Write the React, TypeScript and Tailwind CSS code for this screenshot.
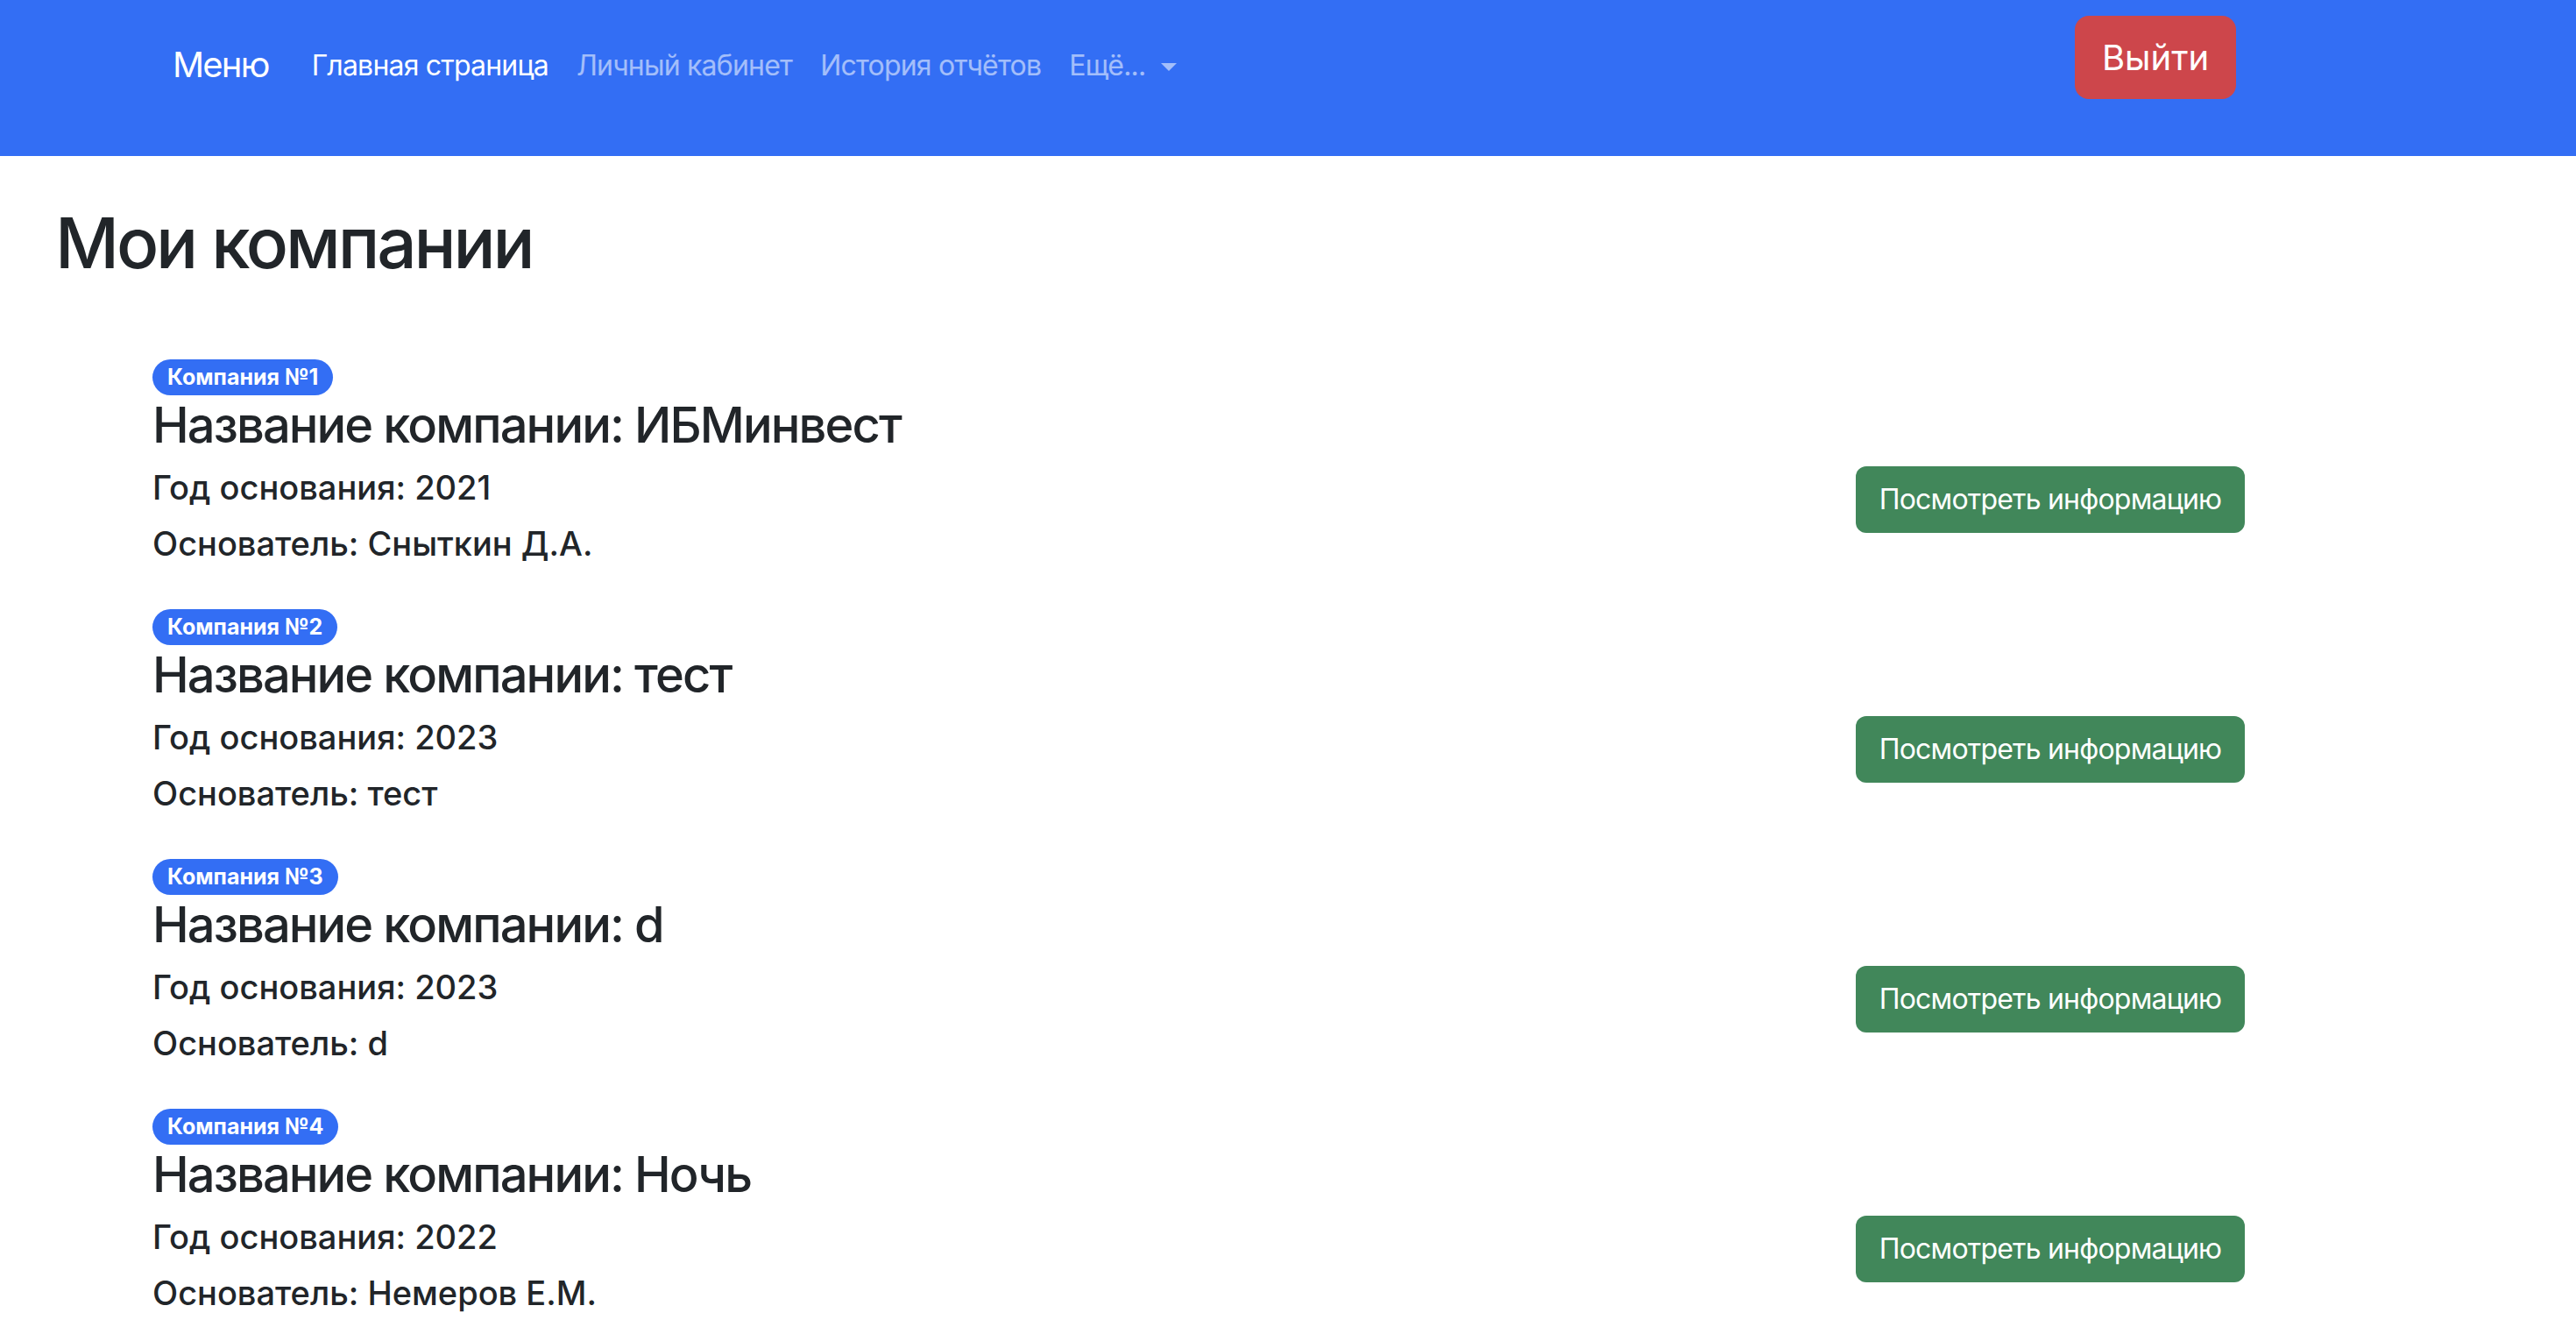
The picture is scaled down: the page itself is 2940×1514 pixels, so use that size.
import React from "react";

const companies = [
  { n: 1, name: "ИБМинвест", year: "2021", founder: "Сныткин Д.А." },
  { n: 2, name: "тест", year: "2023", founder: "тест" },
  { n: 3, name: "d", year: "2023", founder: "d" },
  { n: 4, name: "Ночь", year: "2022", founder: "Немеров Е.М." },
];

export default function App() {
  return (
    <div
      className="min-h-[1514px] bg-white text-[#212529]"
      style={{ fontFamily: "Inter, 'Noto Sans', sans-serif" }}
    >
      <nav className="flex h-[178px] items-start bg-[#336ef4]">
        <a className="ml-[197px] mt-[44px] text-[40px] leading-[60px] tracking-[-0.045em] text-white">Меню</a>
        <ul className="ml-[33px] mt-[51px] flex text-[32px] leading-[48px] tracking-[-0.025em]">
          <li className="px-4 text-white">Главная страница</li>
          <li className="px-4 text-white/55">Личный кабинет</li>
          <li className="px-4 text-white/55">История отчётов</li>
          <li className="flex items-center px-4 text-white/55">
            Ещё...
            <span className="ml-[18px] mt-[2px] h-0 w-0 border-x-[9px] border-t-[9px] border-x-transparent border-t-white/55" />
          </li>
        </ul>
        <button className="ml-auto mr-[388px] mt-[18px] flex h-[95px] w-[184px] items-center justify-center rounded-[16px] bg-[#cd464b] text-[40px] text-white">
          Выйти
        </button>
      </nav>

      <h1 className="ml-[63px] mt-[51px] text-[80px] font-medium leading-[96px] tracking-[-0.039em]">Мои компании</h1>

      <div className="ml-[174px] mt-[85px] flex w-[2388px] flex-col gap-[51px]">
        {companies.map((c) => (
          <div key={c.n} className="flex justify-between">
            <div className="flex flex-col items-start">
              <span className="inline-flex h-[41px] items-center rounded-full bg-[#336ef4] px-[17px] text-[25px] font-bold leading-none text-white">
                Компания №{c.n}
              </span>
              <h3 className="mt-[6px] text-[56px] font-medium leading-[56px] tracking-[-0.034em]">
                Название компании: {c.name}
              </h3>
              <p className="mt-[19px] text-[38px] font-medium leading-[48px]">Год основания: {c.year}</p>
              <p className="mt-[16px] text-[38px] font-medium leading-[48px]">Основатель: {c.founder}</p>
            </div>
            <div className="pt-[122px]">
              <button className="flex h-[76px] w-[444px] items-center justify-center rounded-[12px] bg-[#41875a] text-[32px] tracking-[-0.025em] text-white">
                Посмотреть информацию
              </button>
            </div>
          </div>
        ))}
      </div>
    </div>
  );
}
